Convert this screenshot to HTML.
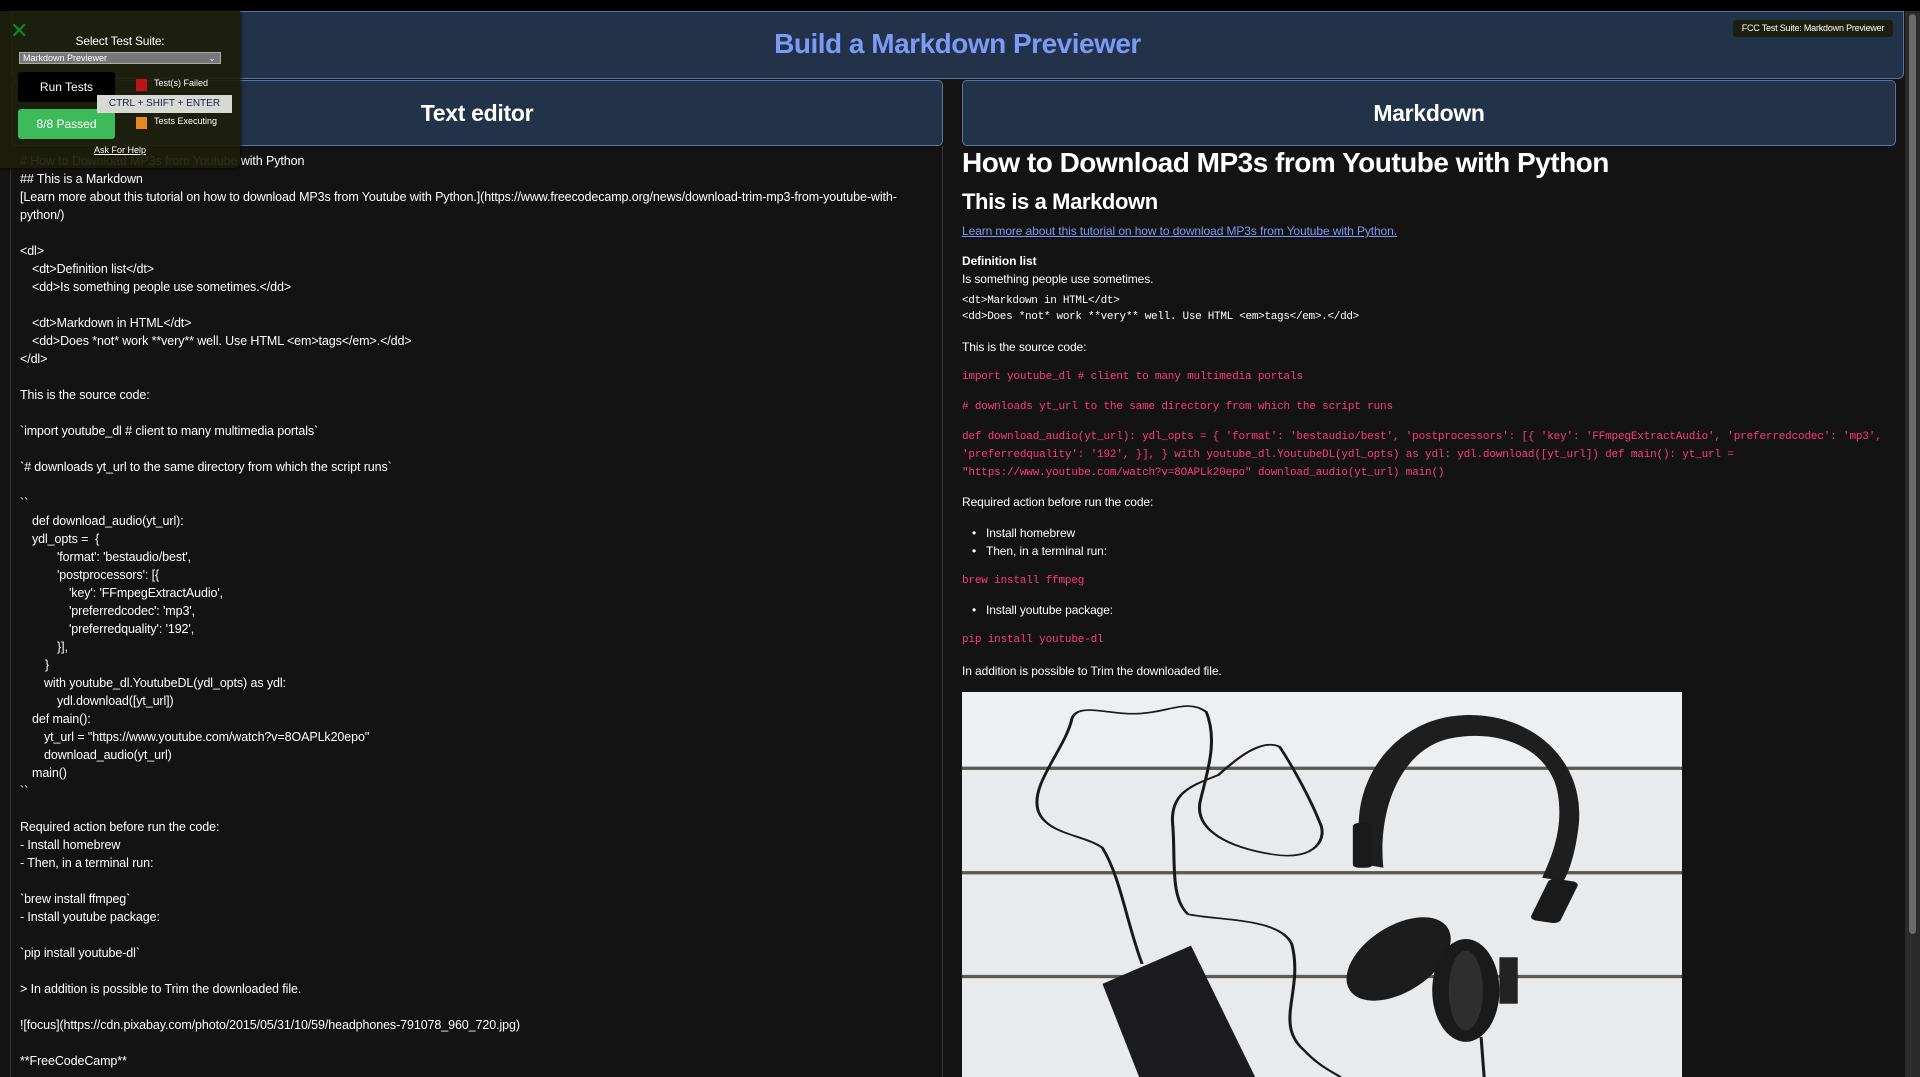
<!DOCTYPE html>
<html><head><meta charset="utf-8"><style>
*{box-sizing:border-box;margin:0;padding:0}
body{width:1920px;height:1077px;background:#131313;font-family:"Liberation Sans",Arial,sans-serif;color:#fff;overflow:hidden;position:relative}
.top{position:absolute;left:0;top:0;width:1920px;height:11px;background:#000}
.hdr{position:absolute;left:11px;top:11px;width:1893px;height:68px;background:#223248;border:1px solid #5a76a0;border-radius:0 0 6px 6px;text-align:center}
.hdr h1{font-size:28px;font-weight:bold;color:#7b9af5;line-height:64px;letter-spacing:-0.5px}
.panel{position:absolute;top:80px;height:66px;background:#223248;border:1px solid #5a76a0;border-radius:5px;text-align:center;font-size:23px;font-weight:bold;line-height:64px;letter-spacing:-0.3px}
.ed{position:absolute;left:10px;top:146px;width:933px;height:931px;border-left:1px solid #333;border-right:1px solid #333;background:#131313;font-size:12.5px;line-height:18px;padding:6px 0 0 9px;color:#fff;letter-spacing:-0.1px}
.ed div{min-height:18px;white-space:nowrap}
.pv{position:absolute;left:962px;top:0}
.pv div{position:absolute;left:0;white-space:nowrap;font-size:12px;letter-spacing:-0.1px}
.m{font-family:"Liberation Mono",monospace;font-size:11px !important;letter-spacing:-0.3px !important}
.pk{color:#ff3b7a;font-family:"Liberation Mono",monospace;font-size:11px !important;letter-spacing:-0.17px !important}
.sb{position:absolute;left:1905px;top:11px;width:15px;height:1066px;background:#2b2b2b}
.th{position:absolute;left:1909px;top:14px;width:7px;height:920px;background:#6a6a6a;border-radius:4px}
.tp{position:absolute;left:0;top:11px;width:240px;height:157px;background:rgba(28,30,10,0.93);border-radius:0 0 6px 0;box-shadow:0 0 4px #000}
</style></head><body>
<div class="top"></div>
<div class="hdr"><h1>Build a Markdown Previewer</h1></div>
<div style="position:absolute;left:1733px;top:20px;width:160px;height:17px;background:#1d1f0e;border-radius:3px;font-size:9px;line-height:17px;text-align:center;color:#fff;letter-spacing:-0.2px">FCC Test Suite: Markdown Previewer</div>
<div class="panel" style="left:11px;width:932px">Text editor</div>
<div class="panel" style="left:962px;width:934px">Markdown</div>
<div class="ed">
<div># How to Download MP3s from Youtube with Python</div>
<div>## This is a Markdown</div>
<div>[Learn more about this tutorial on how to download MP3s from Youtube with Python.](https://www.freecodecamp.org/news/download-trim-mp3-from-youtube-with-</div>
<div>python/)</div>
<div></div>
<div>&lt;dl&gt;</div>
<div style="padding-left:12px">&lt;dt&gt;Definition list&lt;/dt&gt;</div>
<div style="padding-left:12px">&lt;dd&gt;Is something people use sometimes.&lt;/dd&gt;</div>
<div></div>
<div style="padding-left:12px">&lt;dt&gt;Markdown in HTML&lt;/dt&gt;</div>
<div style="padding-left:12px">&lt;dd&gt;Does *not* work **very** well. Use HTML &lt;em&gt;tags&lt;/em&gt;.&lt;/dd&gt;</div>
<div>&lt;/dl&gt;</div>
<div></div>
<div>This is the source code:</div>
<div></div>
<div>`import youtube_dl # client to many multimedia portals`</div>
<div></div>
<div>`# downloads yt_url to the same directory from which the script runs`</div>
<div></div>
<div>``</div>
<div style="padding-left:12px">def download_audio(yt_url):</div>
<div style="padding-left:12px">ydl_opts = &nbsp;{</div>
<div style="padding-left:37px">'format': 'bestaudio/best',</div>
<div style="padding-left:37px">'postprocessors': [{</div>
<div style="padding-left:49px">'key': 'FFmpegExtractAudio',</div>
<div style="padding-left:49px">'preferredcodec': 'mp3',</div>
<div style="padding-left:49px">'preferredquality': '192',</div>
<div style="padding-left:37px">}],</div>
<div style="padding-left:25px">}</div>
<div style="padding-left:24px">with youtube_dl.YoutubeDL(ydl_opts) as ydl:</div>
<div style="padding-left:37px">ydl.download([yt_url])</div>
<div style="padding-left:12px">def main():</div>
<div style="padding-left:24px">yt_url = "https://www.youtube.com/watch?v=8OAPLk20epo"</div>
<div style="padding-left:24px">download_audio(yt_url)</div>
<div style="padding-left:12px">main()</div>
<div>``</div>
<div></div>
<div>Required action before run the code:</div>
<div>- Install homebrew</div>
<div>- Then, in a terminal run:</div>
<div></div>
<div>`brew install ffmpeg`</div>
<div>- Install youtube package:</div>
<div></div>
<div>`pip install youtube-dl`</div>
<div></div>
<div>&gt; In addition is possible to Trim the downloaded file.</div>
<div></div>
<div>![focus](https://cdn.pixabay.com/photo/2015/05/31/10/59/headphones-791078_960_720.jpg)</div>
<div></div>
<div>**FreeCodeCamp**</div>
</div>

<div class="pv">
<div style="top:147px;font-size:28px;font-weight:bold;letter-spacing:-0.5px">How to Download MP3s from Youtube with Python</div>
<div style="top:189px;font-size:22px;font-weight:bold;letter-spacing:-0.4px">This is a Markdown</div>
<div style="top:224px;color:#7b9af5;text-decoration:underline;font-size:12px">Learn more about this tutorial on how to download MP3s from Youtube with Python.</div>
<div style="top:254px;font-weight:bold;font-size:12px">Definition list</div>
<div style="top:272px;font-size:12px">Is something people use sometimes.</div>
<div class="m" style="top:295px">&lt;dt&gt;Markdown in HTML&lt;/dt&gt;</div>
<div class="m" style="top:311px">&lt;dd&gt;Does *not* work **very** well. Use HTML &lt;em&gt;tags&lt;/em&gt;.&lt;/dd&gt;</div>
<div style="top:340px;font-size:12px">This is the source code:</div>
<div class="pk" style="top:371px">import youtube_dl # client to many multimedia portals</div>
<div class="pk" style="top:401px"># downloads yt_url to the same directory from which the script runs</div>
<div class="pk" style="top:431px">def download_audio(yt_url): ydl_opts = { 'format': 'bestaudio/best', 'postprocessors': [{ 'key': 'FFmpegExtractAudio', 'preferredcodec': 'mp3',</div>
<div class="pk" style="top:449px">'preferredquality': '192', }], } with youtube_dl.YoutubeDL(ydl_opts) as ydl: ydl.download([yt_url]) def main(): yt_url =</div>
<div class="pk" style="top:467px">"https://www.youtube.com/watch?v=8OAPLk20epo" download_audio(yt_url) main()</div>
<div style="top:495px;font-size:12px">Required action before run the code:</div>
<div style="top:526px;font-size:12px;left:24px">Install homebrew</div>
<div style="top:544px;font-size:12px;left:24px">Then, in a terminal run:</div>
<div style="top:526px;font-size:12px;left:10px">•</div>
<div style="top:544px;font-size:12px;left:10px">•</div>
<div class="pk" style="top:575px">brew install ffmpeg</div>
<div style="top:603px;font-size:12px;left:24px">Install youtube package:</div>
<div style="top:603px;font-size:12px;left:10px">•</div>
<div class="pk" style="top:634px">pip install youtube-dl</div>
<div style="top:664px;font-size:12px">In addition is possible to Trim the downloaded file.</div>
</div>

<svg style="position:absolute;left:962px;top:692px" width="720" height="385" viewBox="0 0 1179 1161" preserveAspectRatio="none">
<rect width="1179" height="1161" fill="#e9eaec"/>
<rect y="0" width="1179" height="225" fill="#eeeff1"/>
<rect y="225" width="1179" height="10" fill="#5d5954"/>
<rect y="540" width="1179" height="10" fill="#5d5954"/>
<rect y="853" width="1179" height="10" fill="#5d5954"/>
<g fill="none" stroke="#1a1a1a" stroke-width="5">
<path d="M295 820 C270 700 260 560 230 470 C200 430 140 430 125 360 C110 280 170 170 180 80 C190 30 240 70 290 65 C340 60 370 20 400 60 C420 150 400 250 390 330 C380 420 440 470 510 490 C580 510 600 440 585 390 C570 320 540 220 520 165 C490 140 450 200 420 250 C380 280 340 300 345 400 C350 500 340 620 370 670 C420 690 520 680 540 760 C560 900 510 1000 560 1080 C580 1120 600 1140 620 1161"/>
<path d="M850 1040 L855 1161"/>
</g>
<path d="M660 520 C620 300 700 80 820 70 C930 60 1020 200 1010 400 C1005 480 995 540 985 570 L950 560 C970 480 985 400 975 300 C960 170 880 110 800 140 C720 170 680 350 690 530 Z" fill="#1e1e1e"/>
<rect x="640" y="395" width="32" height="135" rx="10" fill="#1a1a1a"/>
<rect x="945" y="565" width="50" height="130" rx="12" fill="#1a1a1a" transform="rotate(15 970 630)"/>
<ellipse cx="715" cy="805" rx="70" ry="135" fill="#1c1c1c" transform="rotate(25 715 805)"/>
<ellipse cx="825" cy="900" rx="55" ry="155" fill="#1a1a1a"/>
<ellipse cx="825" cy="900" rx="28" ry="120" fill="#2e2e2e"/>
<rect x="880" y="800" width="30" height="140" fill="#222"/>
<path d="M230 880 L375 765 L480 1161 L290 1161 Z" fill="#1c1c1e"/>
</svg>

<div class="sb"></div><div class="th"></div>

<div class="tp">
<div style="position:absolute;left:10px;top:9px;color:#0f8a1e;font-size:22px;line-height:22px">✕</div>
<div style="position:absolute;left:0;width:240px;top:23px;text-align:center;font-size:12px;letter-spacing:-0.2px">Select Test Suite:</div>
<div style="position:absolute;left:19px;top:41px;width:202px;height:12px;background:#777;border:1px solid #aaa;font-size:9px;line-height:10px;padding-left:3px;color:#fff">Markdown Previewer<span style="position:absolute;right:4px;top:0">⌄</span></div>
<div style="position:absolute;left:18px;top:61px;width:97px;height:30px;background:#000;border-radius:3px;text-align:center;line-height:30px;font-size:12px">Run Tests</div>
<div style="position:absolute;left:18px;top:98px;width:97px;height:30px;background:#3dbb5a;border-radius:3px;text-align:center;line-height:30px;font-size:12px">8/8 Passed</div>
<div style="position:absolute;left:136px;top:68px;width:11px;height:12px;background:#c0121a"></div>
<div style="position:absolute;left:154px;top:67px;font-size:9px">Test(s) Failed</div>
<div style="position:absolute;left:97px;top:84px;width:135px;height:18px;background:#d8d9d4;color:#1a2040;font-size:10px;line-height:18px;text-align:center">CTRL + SHIFT + ENTER</div>
<div style="position:absolute;left:136px;top:106px;width:11px;height:12px;background:#e08a20"></div>
<div style="position:absolute;left:154px;top:105px;font-size:9px">Tests Executing</div>
<div style="position:absolute;left:0;width:240px;top:134px;text-align:center;font-size:9px;text-decoration:underline">Ask For Help</div>
</div>
</body></html>
